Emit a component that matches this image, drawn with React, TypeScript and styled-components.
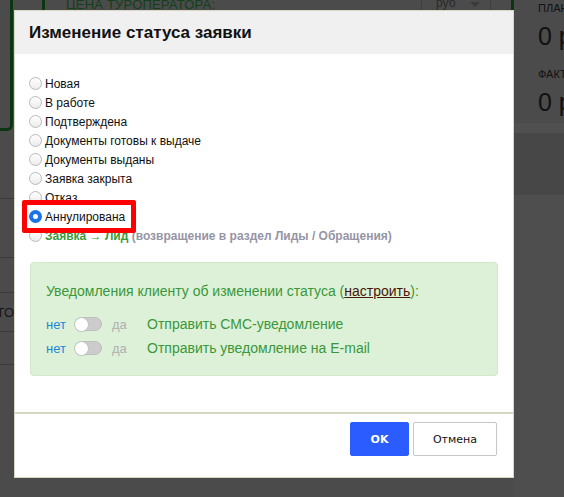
import React, { useState } from 'react'
import styled, { createGlobalStyle } from 'styled-components'

const GlobalStyle = createGlobalStyle`
  html, body {
    margin: 0;
    padding: 0;
    background: #4b4b4b;
  }
  body {
    font-family: "Liberation Sans", Arial, sans-serif;
  }
`

const statuses = [
  'Новая',
  'В работе',
  'Подтверждена',
  'Документы готовы к выдаче',
  'Документы выданы',
  'Заявка закрыта',
  'Отказ',
  'Аннулирована',
]

const Page = styled.div`
  position: relative;
  width: 564px;
  height: 497px;
  overflow: hidden;
  background: #4b4b4b;
`

/* dimmed page behind the dialog */
const Backdrop = styled.div`
  display: flex;
  height: 100%;
`

const LeftCol = styled.div`
  flex: none;
  width: 14px;
  display: flex;
  flex-direction: column;
`

const LeftCard = styled.div`
  height: 128px;
  width: 10px;
  border-right: 3px solid #0c3512;
  border-bottom: 3px solid #0c3512;
  border-bottom-right-radius: 6px;
`

const LeftRow = styled.div<{ $h: number }>`
  height: ${p => p.$h}px;
  border-bottom: 1px solid #3a3a3a;
  font-size: 13px;
  color: #151515;
  display: flex;
  align-items: center;
  justify-content: flex-end;
  overflow: hidden;
  white-space: nowrap;
`

const CenterCol = styled.div`
  flex: none;
  width: 500px;
  display: flex;
  flex-direction: column;
`

const TopStrip = styled.div`
  height: 10px;
  display: flex;
  align-items: flex-start;
  overflow: hidden;
`

const GreenLine = styled.div<{ $ml: number }>`
  width: 3px;
  height: 10px;
  margin-left: ${p => p.$ml}px;
  background: #0c3512;
`

const FaintLabel = styled.div`
  margin-left: 21px;
  margin-top: -3px;
  font-size: 13px;
  color: #11401a;
  letter-spacing: 0.2px;
`

const FaintSelect = styled.div`
  margin-left: auto;
  width: 70px;
  height: 20px;
  margin-top: -10px;
  border-left: 1px solid #3f3f3f;
  border-right: 1px solid #3f3f3f;
  display: flex;
  align-items: flex-end;
  justify-content: space-between;
  padding: 0 10px 0 14px;
  box-sizing: border-box;
  font-size: 12px;
  color: #2a2a2a;
`

const FaintArrow = styled.span`
  width: 0;
  height: 0;
  border-left: 5px solid transparent;
  border-right: 5px solid transparent;
  border-top: 5px solid #3a3a3a;
  margin-bottom: 3px;
`

const RightCol = styled.div`
  flex: 1;
  min-width: 0;
  display: flex;
  flex-direction: column;
`

const RightTop = styled.div`
  height: 123px;
  padding-left: 24px;
  display: flex;
  flex-direction: column;
  color: #111;
  white-space: nowrap;
  overflow: hidden;
`

const SmallCap = styled.div<{ $mt: number }>`
  font-size: 11px;
  margin-top: ${p => p.$mt}px;
  line-height: 12px;
`

const BigNum = styled.div`
  font-size: 25px;
  line-height: 28px;
  margin-top: 8px;
`

const RightBand = styled.div<{ $h: number; $bg: string }>`
  height: ${p => p.$h}px;
  background: ${p => p.$bg};
`

/* dialog */
const Dialog = styled.div`
  position: absolute;
  left: 14px;
  top: 10px;
  width: 500px;
  height: 468px;
  box-sizing: border-box;
  background: #fff;
  border: 1px solid #d6d6c2;
  display: flex;
  flex-direction: column;
`

const Header = styled.div`
  height: 43px;
  background: #f0f0f0;
  display: flex;
  align-items: center;
  padding-left: 14px;
  font-size: 17px;
  font-weight: bold;
  color: #111;
`

const Body = styled.div`
  flex: 1;
  padding: 20px 15px 0 14px;
  display: flex;
  flex-direction: column;
`

const RadioList = styled.div`
  display: flex;
  flex-direction: column;
`

const RadioRow = styled.label`
  height: 19px;
  display: flex;
  align-items: center;
  gap: 3px;
  font-size: 12px;
  color: #111;
  cursor: pointer;
`

const Marked = styled.div`
  position: relative;
  &::after {
    content: '';
    position: absolute;
    left: -7px;
    top: -7px;
    width: 104px;
    height: 23px;
    border: 5px solid #ff0000;
    border-radius: 2px;
    pointer-events: none;
  }
`

const Radio = styled.span<{ $on?: boolean }>`
  width: 13px;
  height: 13px;
  box-sizing: border-box;
  border-radius: 50%;
  flex: none;
  border: ${p => (p.$on ? '4px solid #1a73e8' : '1px solid #b9b9b9')};
  background: ${p => (p.$on ? '#fff' : 'linear-gradient(#fff, #ececec)')};
`

const LeadGreen = styled.span`
  font-weight: bold;
  color: #3b9a3b;
`

const LeadGray = styled.span`
  font-weight: bold;
  color: #9595a5;
`

const Notify = styled.div`
  margin-top: 17px;
  margin-left: 1px;
  height: 114px;
  box-sizing: border-box;
  background: #dcf1d7;
  border: 1px solid #cfe9c9;
  border-radius: 4px;
  padding: 19px 15px 0;
  display: flex;
  flex-direction: column;
  color: #3b973b;
  font-size: 14px;
`

const NotifyTitle = styled.div`
  height: 18px;
  display: flex;
  align-items: center;
  margin-bottom: 12px;
`

const SetupLink = styled.a`
  color: #4a1608;
  text-decoration: underline;
`

const SwitchRow = styled.div`
  height: 24px;
  display: flex;
  align-items: center;
`

const No = styled.span`
  font-size: 13px;
  color: #1a88d6;
  width: 29px;
`

const Yes = styled.span`
  font-size: 13px;
  color: #b0b0b0;
  margin-left: 10px;
  width: 35px;
`

const Toggle = styled.span`
  width: 27px;
  height: 14px;
  box-sizing: border-box;
  border-radius: 7px;
  background: #cccccc;
  border: 1px solid #bdbdbd;
  display: flex;
  align-items: center;
  &::before {
    content: '';
    width: 13px;
    height: 13px;
    margin-left: -1px;
    border-radius: 50%;
    background: #fff;
    box-shadow: 0 0 0 1px #c4c4c4;
  }
`

const Footer = styled.div`
  height: 55px;
  border-top: 2px solid #d6d6c2;
  display: flex;
  justify-content: flex-end;
  align-items: flex-start;
  gap: 4px;
  padding: 8px 16px 0 0;
`

const Button = styled.button<{ $primary?: boolean }>`
  height: 34px;
  width: ${p => (p.$primary ? '59px' : '84px')};
  border-radius: 2px;
  font-family: "DejaVu Sans", Verdana, sans-serif;
  font-size: 11px;
  cursor: pointer;
  border: 1px solid ${p => (p.$primary ? '#2b5cff' : '#c6c6c6')};
  background: ${p => (p.$primary ? '#2b5cff' : '#fff')};
  color: ${p => (p.$primary ? '#fff' : '#111')};
  font-weight: ${p => (p.$primary ? 'bold' : 'normal')};
`

export default function App() {
  const [selected, setSelected] = useState<string>('Аннулирована')

  return (
    <Page>
      <GlobalStyle />
      <Backdrop>
        <LeftCol>
          <LeftCard />
          <LeftRow $h={67} />
          <LeftRow $h={58} />
          <LeftRow $h={34} />
          <LeftRow $h={38}>ТО</LeftRow>
          <LeftRow $h={32} />
        </LeftCol>
        <CenterCol>
          <TopStrip>
            <GreenLine $ml={28} />
            <FaintLabel>ЦЕНА ТУРОПЕРАТОРА:</FaintLabel>
            <FaintSelect>
              руб
              <FaintArrow />
            </FaintSelect>
            <GreenLine $ml={20} />
          </TopStrip>
        </CenterCol>
        <RightCol>
          <RightTop>
            <SmallCap $mt={2}>ПЛАН</SmallCap>
            <BigNum>0 руб</BigNum>
            <SmallCap $mt={18}>ФАКТ</SmallCap>
            <BigNum>0 руб</BigNum>
          </RightTop>
          <RightBand $h={10} $bg="#505050" />
          <RightBand $h={62} $bg="#474747" />
          <RightBand $h={302} $bg="#4e4e4e" />
        </RightCol>
      </Backdrop>

      <Dialog>
        <Header>Изменение статуса заявки</Header>
        <Body>
          <RadioList>
            {statuses.map(s => {
              const row = (
                <RadioRow key={s} onClick={() => setSelected(s)}>
                  <Radio $on={selected === s} />
                  {s}
                </RadioRow>
              )
              return s === 'Аннулирована' ? <Marked key={s}>{row}</Marked> : row
            })}
            <RadioRow onClick={() => setSelected('lead')}>
              <Radio $on={selected === 'lead'} />
              <span>
                <LeadGreen>Заявка → Лид</LeadGreen>{' '}
                <LeadGray>(возвращение в раздел Лиды / Обращения)</LeadGray>
              </span>
            </RadioRow>
          </RadioList>
          <Notify>
            <NotifyTitle>
              Уведомления клиенту об изменении статуса (<SetupLink>настроить</SetupLink>):
            </NotifyTitle>
            <SwitchRow>
              <No>нет</No>
              <Toggle />
              <Yes>да</Yes>
              Отправить СМС-уведомление
            </SwitchRow>
            <SwitchRow>
              <No>нет</No>
              <Toggle />
              <Yes>да</Yes>
              Отправить уведомление на E-mail
            </SwitchRow>
          </Notify>
        </Body>
        <Footer>
          <Button $primary>OK</Button>
          <Button>Отмена</Button>
        </Footer>
      </Dialog>
    </Page>
  )
}
